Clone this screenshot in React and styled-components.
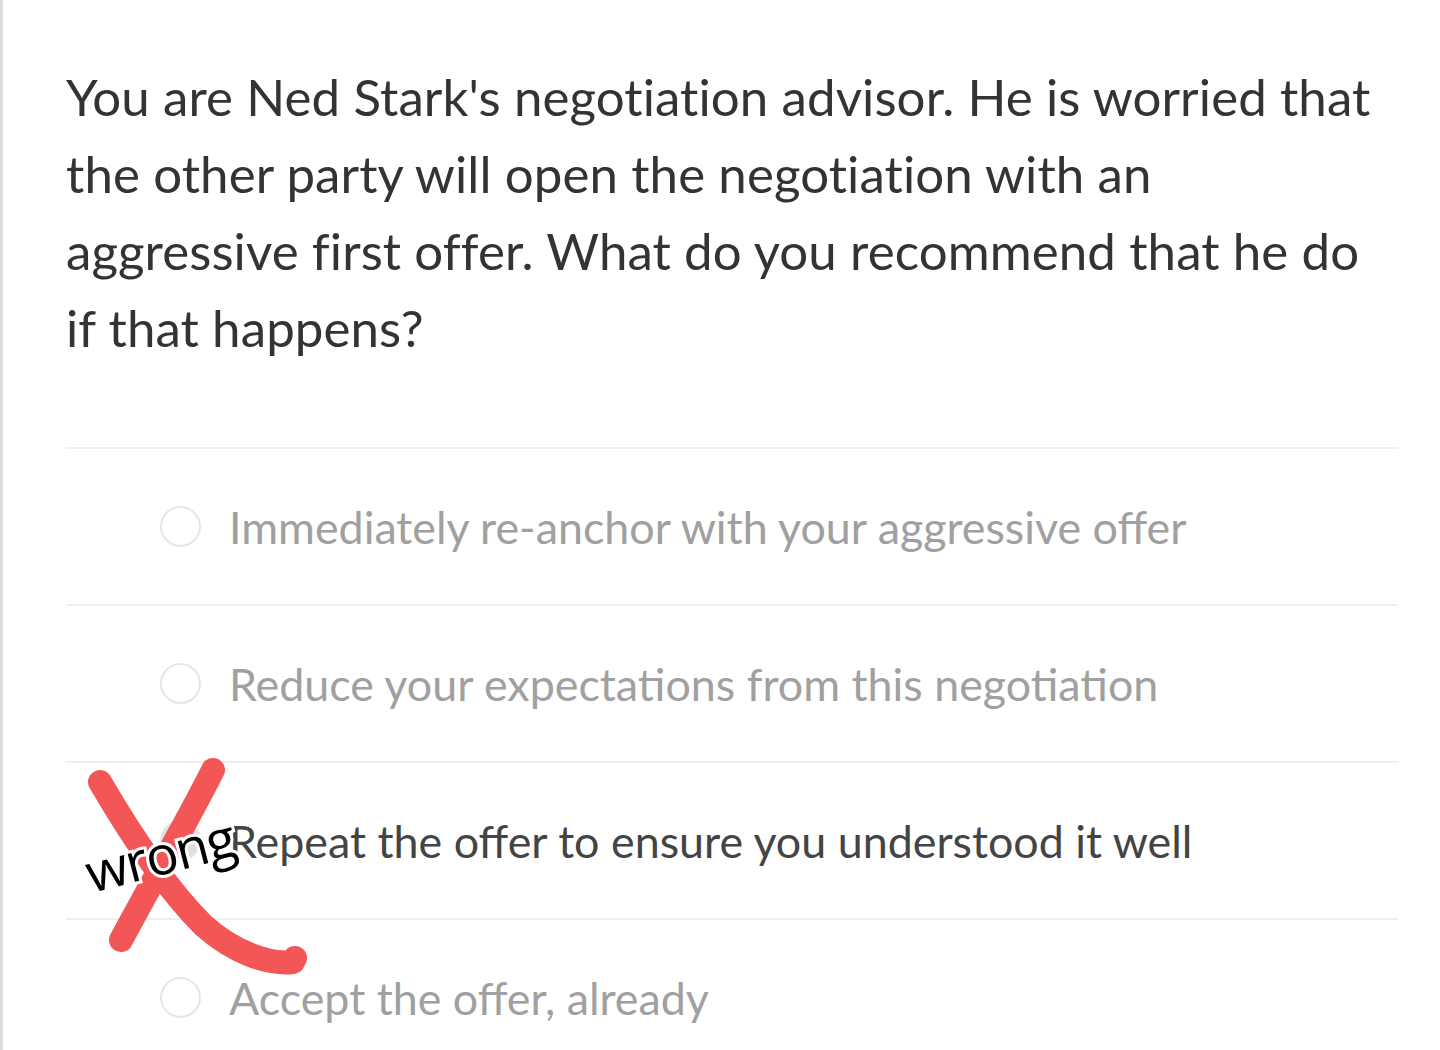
import React from "react";
import styled, { createGlobalStyle } from "styled-components";

const Global = createGlobalStyle`
  html, body { margin: 0; padding: 0; background: #fff; }
  body { font-family: Lato, "Open Sans", sans-serif; }
`;

const Page = styled.div`
  position: relative;
  width: 1440px;
  height: 1050px;
  overflow: hidden;
  background: #fff;
  border-left: 3px solid #dcdcdc;
  box-sizing: border-box;
`;

const Content = styled.div`
  padding: 58px 42px 0 63px;
`;

const Question = styled.p`
  margin: 0 0 81px 0;
  max-width: 1318px;
  font-size: 51px;
  line-height: 77px;
  color: #333;
  letter-spacing: 0.1px;
`;

const Options = styled.div`
  display: flex;
  flex-direction: column;
  border-top: 2px solid #efefef;
`;

const Row = styled.label`
  display: flex;
  align-items: center;
  gap: 28px;
  height: 155px;
  padding-left: 94px;
  border-bottom: 2px solid #efefef;
  &:last-child { border-bottom: none; }
`;

const Radio = styled.span`
  width: 37px;
  height: 37px;
  border-radius: 50%;
  border: 2px solid #e6e6e6;
  background: ${p => (p.$checked ? "#dedede" : "#fff")};
  flex: none;
`;

const OptionText = styled.span`
  font-size: 44.8px;
  color: ${p => (p.$checked ? "#444" : "#a0a0a0")};
  letter-spacing: 0;
`;

const Mark = styled.div`
  position: absolute;
  left: 0;
  top: 0;
  width: 1440px;
  height: 1050px;
  pointer-events: none;
`;

const WrongLabel = styled.span`
  position: absolute;
  left: 90px;
  top: 845px;
  font-family: "Open Sans", "Noto Sans", sans-serif;
  font-size: 54px;
  color: #000;
  transform: rotate(-14.5deg);
  transform-origin: left bottom;
  -webkit-text-stroke: 6px #fff;
  paint-order: stroke fill;
  letter-spacing: -1.5px;
  line-height: 1;
`;

const options = [
  "Immediately re-anchor with your aggressive offer",
  "Reduce your expectations from this negotiation",
  "Repeat the offer to ensure you understood it well",
  "Accept the offer, already",
];

export default function App() {
  return (
    <Page>
      <Global />
      <Content>
        <Question>
          You are Ned Stark's negotiation advisor. He is worried that the other
          party will open the negotiation with an aggressive first offer. What do
          you recommend that he do if that happens?
        </Question>
        <Options>
          {options.map((o, i) => (
            <Row key={o}>
              <Radio $checked={i === 2} />
              <OptionText $checked={i === 2}>{o}</OptionText>
            </Row>
          ))}
        </Options>
      </Content>
      <Mark>
        <svg width="1440" height="1050" viewBox="0 0 1440 1050">
          <g fill="none" stroke="#f25656" strokeWidth="24" strokeLinecap="round" strokeLinejoin="round">
            <path d="M210 770 C185 820 150 880 118 940" />
            <path d="M97 782 C125 830 160 885 200 925 C230 952 265 965 290 962 L292 958" />
          </g>
        </svg>
        <WrongLabel>wrong</WrongLabel>
      </Mark>
    </Page>
  );
}
